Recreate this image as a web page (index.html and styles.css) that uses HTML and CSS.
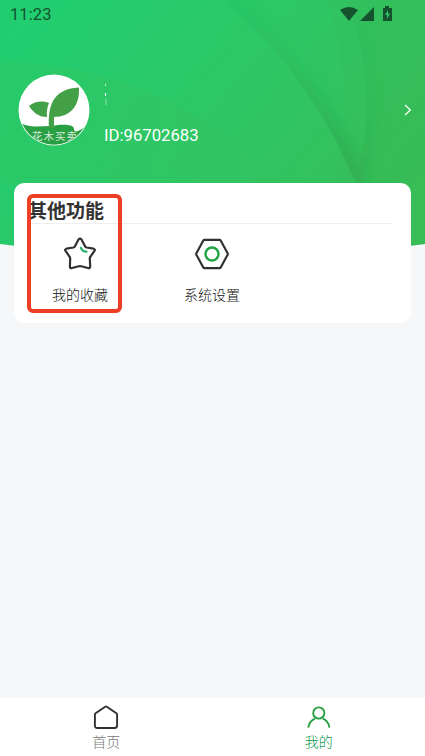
FILE: index.html
```html
<!DOCTYPE html>
<html lang="zh-CN">
<head>
<meta charset="utf-8">
<meta name="viewport" content="width=device-width, initial-scale=1">
<title>我的</title>
<link rel="stylesheet" href="styles.css">
</head>
<body>
<div class="app">
  <svg class="backdrop" viewBox="0 0 425 262" aria-hidden="true">
    <defs>
      <linearGradient id="base" gradientUnits="userSpaceOnUse" x1="30" y1="0" x2="350" y2="260">
        <stop offset="0" stop-color="#20ce70"/>
        <stop offset=".5" stop-color="#2dc766"/>
        <stop offset="1" stop-color="#37bf59"/>
      </linearGradient>
      <linearGradient id="fade" x1="0" y1="0" x2="0" y2="1">
        <stop offset="0" stop-color="#239f45" stop-opacity=".08"/>
        <stop offset="1" stop-color="#23893a" stop-opacity=".42"/>
      </linearGradient>
      <linearGradient id="soft" gradientUnits="userSpaceOnUse" x1="180" y1="100" x2="210" y2="184">
        <stop offset="0" stop-color="#45bb50" stop-opacity=".16"/>
        <stop offset="1" stop-color="#45bb50" stop-opacity=".04"/>
      </linearGradient>
      <filter id="blur" filterUnits="userSpaceOnUse" x="180" y="-40" width="245" height="302"><feGaussianBlur stdDeviation="8"/></filter>
      <clipPath id="edge"><path d="M0 0H425V244Q212 272 0 244Z"/></clipPath>
      <clipPath id="outer"><path d="M222 0C280 48 325 108 356 184L380 262H425V0Z"/></clipPath>
      <clipPath id="far"><path d="M347 0C371 62 371 124 356 184L370 262H425V0Z"/></clipPath>
    </defs>
    <g clip-path="url(#edge)">
      <rect width="425" height="262" fill="url(#base)"/>
      <path d="M0 61C115 64 216 109 273 184H0Z" fill="url(#soft)"/>
      <g clip-path="url(#outer)">
        <path d="M222 0C280 48 325 108 356 184" fill="none" stroke="url(#fade)" stroke-width="18" filter="url(#blur)"/>
      </g>
      <path d="M326 0C349 62 350 128 331 184L350 262H425V0Z" fill="#3bb756" fill-opacity=".15"/>
      <path d="M347 0C371 62 371 124 356 184L370 262H425V0Z" fill="#3bb34d" fill-opacity=".12"/>
      <g clip-path="url(#far)">
        <path d="M347 0C371 62 371 124 356 184" fill="none" stroke="url(#fade)" stroke-opacity=".4" stroke-width="14" filter="url(#blur)"/>
      </g>
    </g>
  </svg>

  <header class="status">
    <span class="clock">11:23</span>
    <svg class="status-icons" viewBox="0 0 54 18" aria-hidden="true">
      <path d="M0 5Q9-1 18 5L9 16Z"/>
      <path d="M34 2V16H20Z"/>
      <path d="M45 1H49V3H52V16H43V3H45Z"/>
      <path class="bolt" d="M48 5L45 10H47V14L50 8.5H48Z"/>
    </svg>
  </header>

  <section class="profile">
    <svg class="avatar" viewBox="0 0 72 72" role="img" aria-label="花木买卖">
      <defs><clipPath id="disc"><circle cx="36" cy="36" r="34.7"/></clipPath></defs>
      <circle cx="36" cy="36" r="35.5" fill="#fff"/>
      <g clip-path="url(#disc)">
        <path d="M0 47C10 55 22 52 34 52C44 50 56 50 56 55C56 60 62 57 72 49V72H0Z" fill="#299f43"/>
        <path d="M11 32C17 27 25 26.500 31 29C29 34 28.500 38 29 43C20 43 15 38 11 32Z" fill="#43a047"/>
        <path d="M31 54C30 34 33 15 61 13.500C62 32 52 43 36 43V54Z" fill="#43a047"/>
        <text class="avatar-label" x="14" y="65.500">花木买卖</text>
      </g>
    </svg>
    <div class="identity">
      <svg class="name-mark" viewBox="0 0 4 26" aria-hidden="true">
        <path d="M1 4L2 1V4ZM1 11H2V14H1Z"/><path d="M2 17V23" class="name-line"/>
      </svg>
      <span class="user-id">ID:96702683</span>
    </div>
    <svg class="chevron" viewBox="0 0 8 12" aria-hidden="true"><path d="M1 1L6.300 6L1 11"/></svg>
  </section>

  <main class="card">
    <h2 class="card-title">其他功能</h2>
    <div class="features">
      <a class="feature">
        <svg class="feature-icon" viewBox="0 0 36 36" aria-hidden="true">
          <path class="ink" d="M16.500 3.500Q18 1.800 19.500 3.500L23 10.200Q23.500 11.200 24.700 11.500L31.500 12.700Q33.700 13.300 32.300 15.100L28.300 20.800Q27.600 21.700 27.800 22.800L28.200 30.200Q28.200 32.700 26 32L19.200 30.300Q18 30 16.800 30.300L10 32Q7.800 32.700 7.900 30.200L8.200 22.800Q8.300 21.700 7.600 20.800L3.700 15.100Q2.300 13.300 4.500 12.700L11.300 11.500Q12.500 11.200 13 10.200Z"/>
          <path class="accent" d="M18.900 11.800Q20.500 15.700 24.500 15.600"/>
        </svg>
        <span>我的收藏</span>
      </a>
      <a class="feature">
        <svg class="feature-icon" viewBox="0 0 36 36" aria-hidden="true">
          <path class="ink" d="M10.500 3.800H25.500Q26.300 3.800 26.700 4.500L33.600 17.200Q34 18 33.600 18.800L26.700 31.500Q26.300 32.200 25.500 32.200H10.500Q9.700 32.200 9.300 31.500L2.400 18.800Q2 18 2.400 17.200L9.300 4.500Q9.700 3.800 10.500 3.800Z"/>
          <circle class="accent ring" cx="18" cy="18" r="6.500"/>
        </svg>
        <span>系统设置</span>
      </a>
    </div>
    <div class="highlight"></div>
  </main>

  <nav class="tabs">
    <a class="tab">
      <svg viewBox="0 0 28 26" aria-hidden="true"><path d="M2.900 9.500Q2.900 8.700 3.600 8.200L13.200 1.700Q14 1.200 14.800 1.700L24.400 8.200Q25.100 8.700 25.100 9.500V20.600Q25.100 23 22.700 23H5.300Q2.900 23 2.900 20.600Z"/></svg>
      <span>首页</span>
    </a>
    <a class="tab active">
      <svg viewBox="0 0 28 26" aria-hidden="true"><circle cx="13.800" cy="8" r="5.600"/><path d="M3.300 22.600C3.900 18.300 6.400 15.200 9.800 13.600M17.800 13.600C21.400 15.100 23.900 18.300 24.500 22.600"/></svg>
      <span>我的</span>
    </a>
  </nav>
</div>
</body>
</html>
```
FILE: styles.css
```css
* {
  box-sizing: border-box;
}

body {
  margin: 0;
  font-family: Roboto, "Noto Sans CJK SC", sans-serif;
  color: #333;
}

.app {
  position: relative;
  display: flex;
  flex-direction: column;
  height: 756px;
  overflow: hidden;
  background: #f5f7f9;
}

.backdrop {
  position: absolute;
  top: 0;
  left: 0;
  width: 425px;
  height: 262px;
}

.status,
.profile,
.card,
.tabs {
  position: relative;
  flex-shrink: 0;
}

.status {
  display: flex;
  justify-content: space-between;
  height: 30px;
  padding: 5px 32px 0 10px;
}

.clock {
  font-size: 16.5px;
  font-weight: 400;
  line-height: 20px;
  letter-spacing: .1px;
  color: #14532d;
}

.status-icons {
  width: 54px;
  height: 18px;
  margin-right: -1px;
  fill: #14532d;
}

.status-icons .bolt {
  fill: #2fc564;
}

.profile {
  display: flex;
  align-items: center;
  height: 153px;
  padding: 7px 13px 0 18px;
}

.avatar {
  width: 72px;
  height: 72px;
}

.avatar-label {
  font-size: 10.5px;
  letter-spacing: 1px;
  fill: #d5ecd9;
}

.identity {
  display: flex;
  flex-direction: column;
  gap: 18px;
  margin: 8px auto 0 14px;
}

.name-mark {
  width: 4px;
  height: 26px;
  fill: #fff;
}

.name-line {
  stroke: #a9e8c2;
  stroke-width: .8;
}

.user-id {
  color: #fff;
  font-size: 16.7px;
  line-height: 20px;
}

.chevron {
  width: 8px;
  height: 12px;
  fill: none;
  stroke: #fff;
  stroke-width: 1.3;
}

.card {
  height: 140px;
  margin: 0 14px;
  padding: 15px 19px 0 14px;
  border-radius: 10px;
  background: #fff;
}

.card-title {
  height: 26px;
  margin: 0;
  font-size: 19px;
  font-weight: 700;
  line-height: 27px;
  border-bottom: 1px solid #eee;
}

.features {
  display: grid;
  grid-template-columns: repeat(2, 132px);
  margin-left: -14px;
}

.feature {
  display: flex;
  flex-direction: column;
  align-items: center;
  padding-top: 12px;
  font-size: 14px;
  font-weight: 300;
  line-height: 20px;
  color: #111;
}

.feature-icon {
  width: 36px;
  height: 36px;
  margin-bottom: 13px;
  fill: none;
  stroke-linecap: round;
  stroke-linejoin: round;
}

.ink {
  stroke: #303133;
  stroke-width: 2.2;
}

.accent {
  stroke: #21b16b;
  stroke-width: 2.2;
}

.ring {
  stroke: #21a544;
  stroke-width: 2.4;
}

.highlight {
  position: absolute;
  top: 11px;
  left: 13px;
  width: 95px;
  height: 119px;
  border: 4px solid #ed3f27;
  border-radius: 6px;
}

.tabs {
  display: grid;
  grid-template-columns: 1fr 1fr;
  height: 58px;
  margin-top: auto;
  background: #fff;
}

.tab {
  display: flex;
  flex-direction: column;
  align-items: center;
  padding-top: 7px;
  font-size: 14px;
  font-weight: 300;
  line-height: 20px;
  color: #777;
}

.tab svg {
  width: 28px;
  height: 26px;
  margin-bottom: 1px;
  fill: none;
  stroke: #303133;
  stroke-width: 1.9;
}

.tab.active {
  color: #0d9a4e;
}

.tab.active svg {
  stroke: #299f43;
}
```
